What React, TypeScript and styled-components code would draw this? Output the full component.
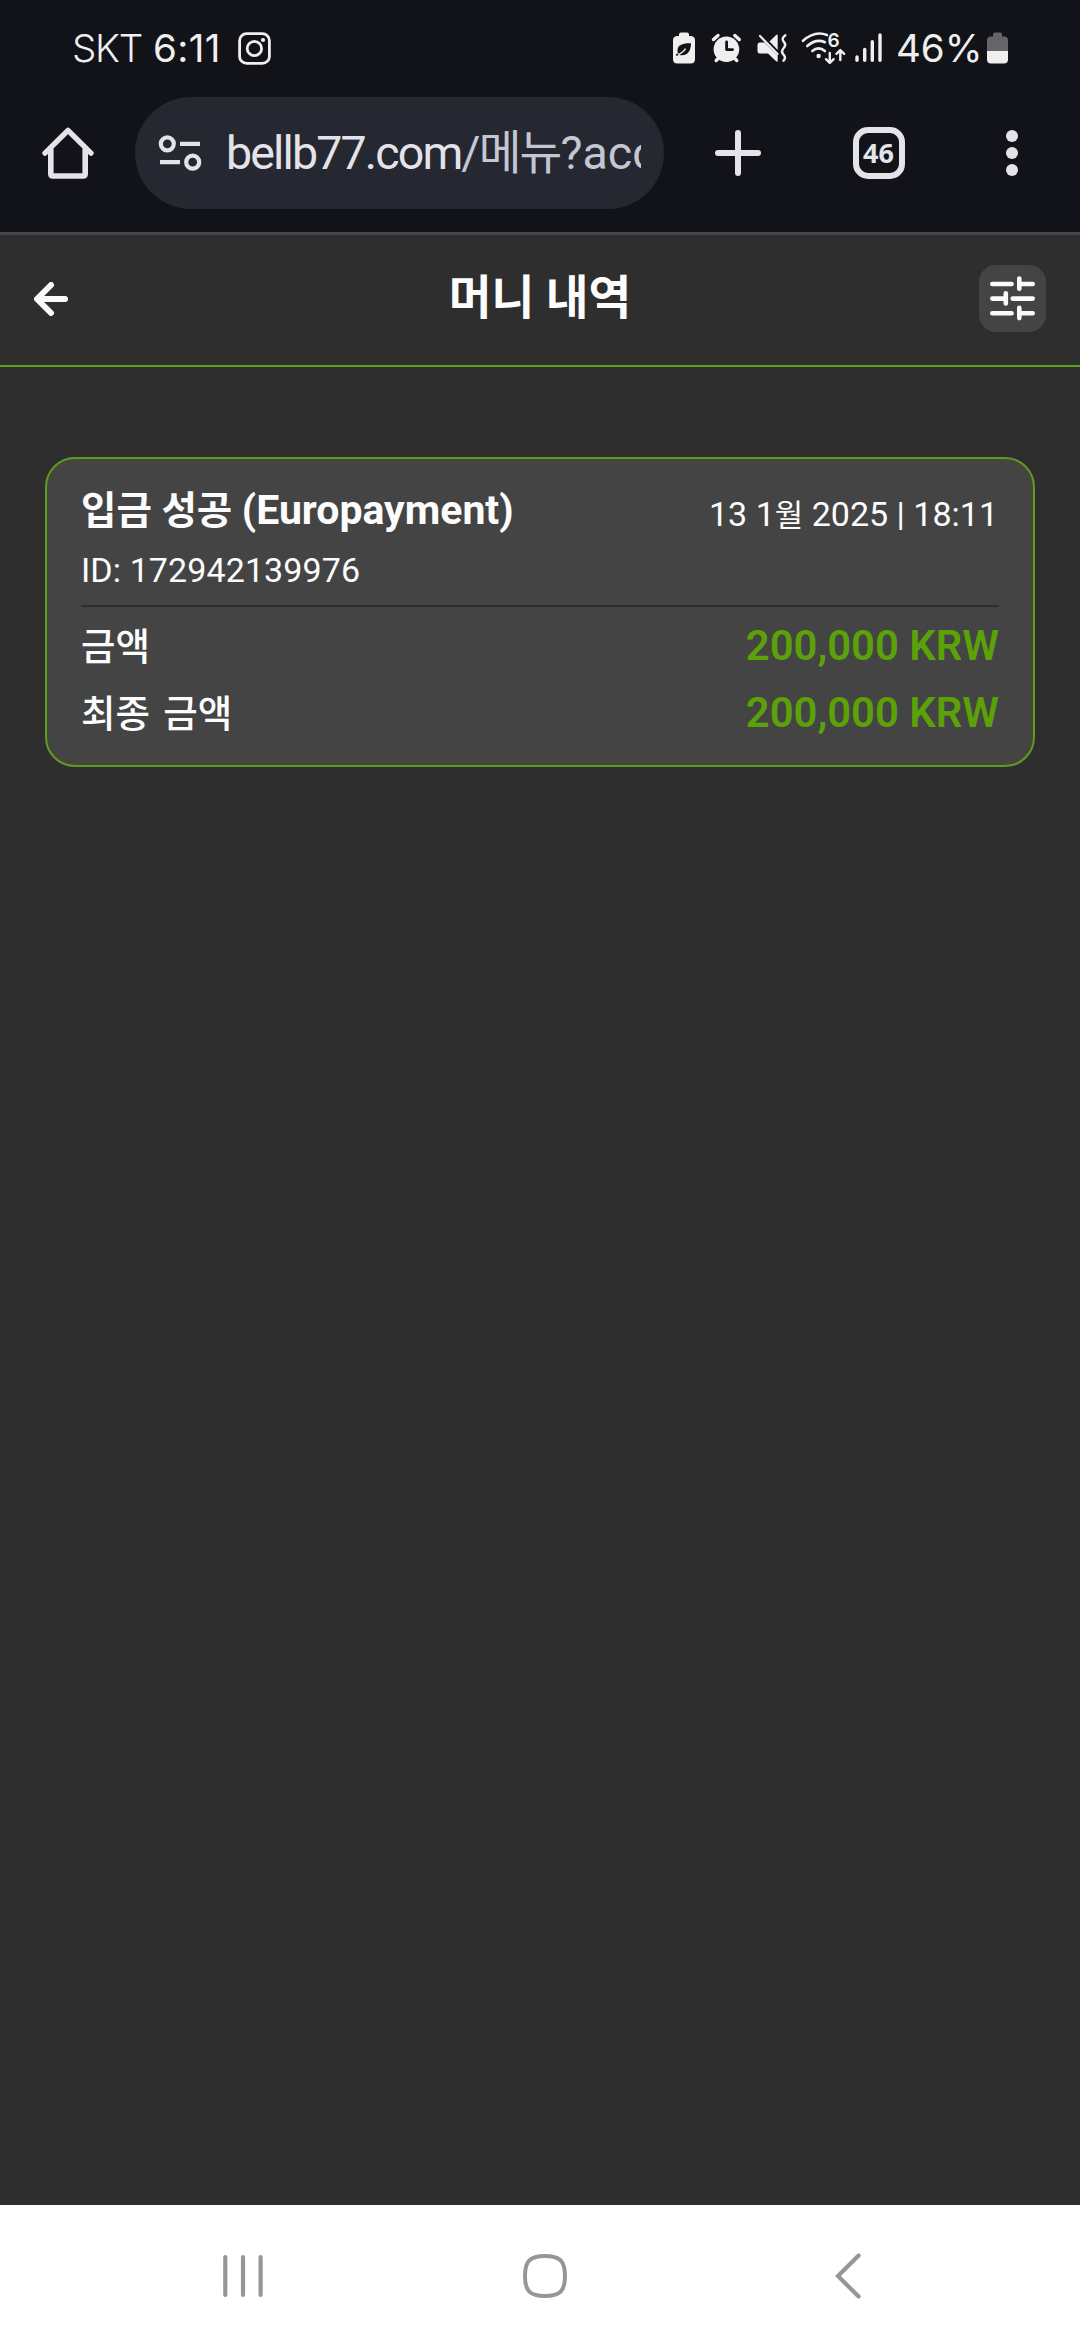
import React from "react";
import styled, { createGlobalStyle } from "styled-components";

const GlobalStyle = createGlobalStyle`
  *, *::before, *::after { box-sizing: border-box; }
  html, body { margin: 0; padding: 0; background: #2e2e2e; }
  svg { display: block; flex: none; }
`;

const roboto = `Roboto, "Noto Sans CJK KR", sans-serif`;
const inter = `Inter, "Noto Sans CJK KR", sans-serif`;

const Screen = styled.div`
  width: 1080px;
  height: 2340px;
  display: flex;
  flex-direction: column;
  overflow: hidden;
  background: #2e2e2e;
  font-family: ${roboto};
  color: #fcfcfc;
`;

/* ---------- system status bar ---------- */

const StatusBar = styled.div`
  height: 97px;
  padding: 28px 70px 0 72px;
  display: flex;
  justify-content: space-between;
  background: #121318;
  color: #efefef;
`;

const StatusGroup = styled.div`
  display: flex;
  align-items: center;
  height: 40px;
`;

const StatusText = styled.span<{ $width: number; $weight?: number; $spacing?: number }>`
  width: ${(p) => p.$width}px;
  flex: none;
  white-space: nowrap;
  font-family: ${inter};
  font-size: 38.5px;
  line-height: 40px;
  font-weight: ${(p) => p.$weight ?? 400};
  letter-spacing: ${(p) => p.$spacing ?? 0}px;
`;

/* Every status glyph shares one vertical window, so only x and width vary. */
const StatusGlyph = ({ x, w, children }: { x: number; w: number; children: React.ReactNode }) => (
  <svg width={w} height={40} viewBox={`${x} 28 ${w} 40`} fill="none">
    {children}
  </svg>
);

/* ---------- browser toolbar ---------- */

const BrowserBar = styled.div`
  height: 138px;
  padding: 0 44px 23px 40px;
  display: flex;
  align-items: center;
  background: #121318;
  border-bottom: 3px solid #45474f;
`;

const AddressPill = styled.div`
  width: 529px;
  height: 112px;
  margin-left: 39px;
  padding: 0 23px 0 23px;
  display: flex;
  align-items: center;
  border-radius: 56px;
  background: #252831;
`;

const Url = styled.div`
  width: 415px;
  margin-left: 22px;
  overflow: hidden;
  white-space: nowrap;
  font-size: 46.5px;
  line-height: 60px;
  letter-spacing: -1.85px;
  color: #e4e3e9;
`;

const UrlPath = styled.span`
  color: #c4c6d1;
`;

const UrlQuery = styled(UrlPath)`
  letter-spacing: 0;
`;

const BarActions = styled.div`
  flex: 1;
  margin-left: 47px;
  display: flex;
  align-items: center;
  justify-content: space-between;
`;

const TabCount = styled.div`
  width: 52px;
  height: 52px;
  margin-left: 4px;
  display: flex;
  align-items: center;
  justify-content: center;
  border: 6px solid #e4e3e9;
  border-radius: 15px;
  font: 700 27px/40px "Noto Sans", sans-serif;
  color: #e4e3e9;
`;

/* ---------- page ---------- */

const PageHeader = styled.header`
  height: 132px;
  padding: 0 34px 3px 34px;
  display: grid;
  grid-template-columns: 67px 1fr 67px;
  align-items: center;
  border-bottom: 2px solid #69953a;
  box-shadow: 0 1px 0 #23380c, inset 0 -1px 0 #23380c;
`;

const Title = styled.h1`
  margin: 0;
  padding-bottom: 2px;
  text-align: center;
  font-size: 46.5px;
  line-height: 60px;
  font-weight: 700;
`;

const FilterButton = styled.div`
  width: 67px;
  height: 67px;
  border-radius: 17px;
  background: #444444;
`;

const Content = styled.main`
  flex: 1;
  padding: 90px 45px 0;
`;

const Card = styled.section`
  height: 310px;
  padding: 24px 34px 0;
  border: 2px solid #65962c;
  border-radius: 30px;
  background: #444444;
  box-shadow: inset 0 0 0 1px #37541a;
`;

const CardHead = styled.div`
  display: flex;
  justify-content: space-between;
  height: 54px;
`;

const CardTitle = styled.div`
  font-size: 38.5px;
  line-height: 54px;
  font-weight: 700;
  white-space: nowrap;
`;

const Provider = styled.span`
  font-size: 41px;
`;

const CardMeta = styled.div`
  padding-top: 6px;
  font-size: 34px;
  line-height: 54px;
  letter-spacing: 0.1px;
  white-space: nowrap;
`;

const CardDate = styled(CardMeta)`
  padding-top: 4px;
  padding-right: 1px;
  letter-spacing: 0;
`;

const Month = styled.span`
  font-size: 31px;
`;

const Divider = styled.div`
  height: 2px;
  margin: 8px 0 5px;
  background: #2e2e2e;
`;

const AmountRow = styled.div`
  height: 67px;
  display: flex;
  align-items: center;
  justify-content: space-between;
`;

const AmountLabel = styled.span`
  padding-top: 2px;
  font-size: 37.5px;
  line-height: 54px;
  font-weight: 500;
  word-spacing: 4px;
`;

const AmountValue = styled.span`
  font-size: 41.8px;
  line-height: 54px;
  font-weight: 600;
  color: #5ba108;
`;

/* ---------- system navigation ---------- */

const NavBar = styled.nav`
  height: 135px;
  padding: 7px 216px 0 218px;
  display: flex;
  align-items: center;
  justify-content: space-between;
  background: #ffffff;
`;

const ink = "#efefef";
const chrome = "#e4e3e9";

const InstagramGlyph = () => (
  <StatusGlyph x={236} w={38}>
    <rect x={239.6} y={33.6} width={29.8} height={29.8} rx={7} stroke={ink} strokeWidth={2.8} />
    <circle cx={254.4} cy={48.5} r={7.2} stroke={ink} strokeWidth={2.8} />
    <circle cx={263} cy={40} r={2.1} fill={ink} />
  </StatusGlyph>
);

const BatterySaverGlyph = () => (
  <StatusGlyph x={670} w={40}>
    <path
      d="M679 36v-1.400q0-2 2-2h6q2 0 2 2V36h1.500q4.500 0 4.500 4.500V59q0 4.500-4.500 4.500h-13q-4.500 0-4.500-4.500V40.500q0-4.500 4.500-4.500z"
      fill={ink}
    />
    <path d="M691 43.300c-8-.3-13.500 1.500-13.500 7.200 0 1 .1 1.800.5 2.700l-2.300 1.300 1 1.500 2.500-1.300c5.500 2.200 11.800-1.200 11.800-11.400z" fill="#121318" />
    <path d="M678 54.500c2.500-.7 5.500-2.500 7.500-5.800" stroke={ink} strokeWidth={1.4} />
  </StatusGlyph>
);

const AlarmGlyph = () => (
  <StatusGlyph x={710} w={44}>
    <circle cx={726.4} cy={49.3} r={12.8} fill={ink} />
    <path d="M713.500 39.500l4.500-4M739.300 39.500l-4.500-4M716.200 60.500l3-3M736.800 60.500l-3-3" stroke={ink} strokeWidth={3.4} strokeLinecap="round" />
    <path d="M726.600 42v7.600h6" stroke="#121318" strokeWidth={2.8} strokeLinecap="round" strokeLinejoin="round" />
  </StatusGlyph>
);

const MuteGlyph = () => (
  <StatusGlyph x={754} w={44}>
    <path d="M760 42.500h4.500l13.200 13V60.500q0 2-1.600.8L768 53.500h-8q-2.500 0-2.500-2.500v-6q0-2.500 2.500-2.500z" fill={ink} />
    <path d="M769.500 41.500l6.600-6.500q1.600-1.300 1.600.7v14.200z" fill={ink} />
    <path d="M760 36l17.500 18" stroke={ink} strokeWidth={2.2} strokeLinecap="round" />
    <path d="M785.300 35.200q-4.200 3.300-1.800 6.200 3.200 3.400.2 6.600-3.200 3.500 0 6.800 2.700 3.200-.3 6" stroke={ink} strokeWidth={2.4} strokeLinecap="round" />
  </StatusGlyph>
);

const WifiGlyph = () => (
  <StatusGlyph x={798} w={56}>
    <path d="M803 40.800q11.800-10.600 24-5.800M807.300 46q9-7.800 17.600-3.800M812.300 51q6.300-5.300 12.600 0" stroke={ink} strokeWidth={2.6} strokeLinecap="round" />
    <circle cx={818.6} cy={56} r={2.2} fill={ink} />
    <text x={827.6} y={46.5} fontFamily="Inter, sans-serif" fontSize={19} fontWeight={600} fill={ink}>6</text>
    <path d="M829.800 53v9.500M826 59.200l3.800 3.800 3.800-3.800M840.300 60V50.300M836.500 53.800l3.800-3.800 3.800 3.800" stroke={ink} strokeWidth={2.4} strokeLinecap="round" strokeLinejoin="round" />
  </StatusGlyph>
);

const SignalGlyph = () => (
  <StatusGlyph x={854} w={42}>
    {[
      [857, 57],
      [864.7, 49.5],
      [872.3, 41.8],
      [880, 35],
    ].map(([x, y]) => (
      <path key={x} d={`M${x} ${y}V60.3`} stroke={ink} strokeWidth={3.4} strokeLinecap="round" />
    ))}
  </StatusGlyph>
);

const BatteryGlyph = () => (
  <StatusGlyph x={984} w={26}>
    <path d="M993 36.500v-1.900q0-2 2-2h5q2 0 2 2v1.900h2q4 0 4 4V51.300h-21V40.500q0-4 4-4z" fill="#646568" />
    <path d="M987 51h21v8.500q0 4-4 4h-13q-4 0-4-4z" fill={ink} />
  </StatusGlyph>
);

const HomeGlyph = () => (
  <svg width={56} height={56} viewBox="40 125 56 56" fill="none">
    <path d="M45 153.200L68 130.300l23 22.900" stroke={chrome} strokeWidth={5.4} strokeLinecap="round" strokeLinejoin="round" />
    <path d="M50.800 148.500v25.300q0 2.200 2.200 2.200h30q2.200 0 2.200-2.200v-25.300" stroke={chrome} strokeWidth={5.6} />
  </svg>
);

const SiteInfoGlyph = () => (
  <svg width={46} height={40} viewBox="158 133 46 40" fill="none" stroke={chrome} strokeWidth={4.2}>
    <circle cx={167.3} cy={143.8} r={6.5} />
    <path d="M180 143.800h20M160 162.200h20" />
    <circle cx={192.7} cy={162.2} r={6.5} />
  </svg>
);

const PlusGlyph = () => (
  <svg width={54} height={54} viewBox="0 0 54 54" fill="none" stroke={chrome} strokeWidth={6} strokeLinecap="round">
    <path d="M27 7v40M7 27h40" />
  </svg>
);

const MoreGlyph = () => (
  <svg width={48} height={54} viewBox="0 0 48 54" fill={chrome}>
    <circle cx={24} cy={10} r={6} />
    <circle cx={24} cy={27} r={6} />
    <circle cx={24} cy={44} r={6} />
  </svg>
);

const BackGlyph = () => (
  <svg width={34} height={34} viewBox="0 0 34 34" fill="none" stroke="#fafafa" strokeWidth={6} strokeLinecap="round" strokeLinejoin="round">
    <path d="M17 3L3 17l14 14M4 17h27" />
  </svg>
);

const SlidersGlyph = () => (
  <svg width={67} height={67} viewBox="0 0 67 67" fill="none" stroke="#fafafa" strokeWidth={4.6} strokeLinecap="round">
    <path d="M13.300 19h19.300M40.300 13.600v10.200M41 19h12.700" />
    <path d="M13.300 33.600h13M26.800 28.300v10.200M33.700 33.600h20" />
    <path d="M13.300 48.200h19.300M40.300 42.900v10.200M41 48.200h12.700" />
  </svg>
);

const RecentsGlyph = () => (
  <svg width={50} height={50} viewBox="218 2251 50 50" fill="none" stroke="#969696" strokeWidth={4.2} strokeLinecap="round">
    <path d="M225.300 2257v38M243 2257v38M260.600 2257v38" />
  </svg>
);

const NavHomeGlyph = () => (
  <svg width={50} height={50} viewBox="520 2251 50 50" fill="none" stroke="#969696" strokeWidth={4}>
    <path d="M545 2256c15 0 20 5 20 20s-5 20-20 20-20-5-20-20 5-20 20-20z" />
  </svg>
);

const NavBackGlyph = () => (
  <svg width={42} height={50} viewBox="822 2251 42 50" fill="none" stroke="#969696" strokeWidth={4.2} strokeLinecap="round">
    <path d="M858.600 2255.500L838 2276l20.600 20.600" />
  </svg>
);

const amounts = [
  { label: "금액", value: "200,000 KRW" },
  { label: "최종 금액", value: "200,000 KRW" },
];

export default function App() {
  return (
    <>
      <GlobalStyle />
      <Screen>
        <StatusBar>
          <StatusGroup>
            <StatusText $width={81} $weight={350} $spacing={-1.3}>SKT</StatusText>
            <StatusText $width={83} $spacing={0.4}>6:11</StatusText>
            <InstagramGlyph />
          </StatusGroup>
          <StatusGroup>
            <BatterySaverGlyph />
            <AlarmGlyph />
            <MuteGlyph />
            <WifiGlyph />
            <SignalGlyph />
            <StatusText $width={88}>46%</StatusText>
            <BatteryGlyph />
          </StatusGroup>
        </StatusBar>

        <BrowserBar>
          <HomeGlyph />
          <AddressPill>
            <SiteInfoGlyph />
            <Url>
              bellb77.com<UrlPath>/메뉴</UrlPath>
              <UrlQuery>?acc</UrlQuery>
            </Url>
          </AddressPill>
          <BarActions>
            <PlusGlyph />
            <TabCount>46</TabCount>
            <MoreGlyph />
          </BarActions>
        </BrowserBar>

        <PageHeader>
          <BackGlyph />
          <Title>머니 내역</Title>
          <FilterButton>
            <SlidersGlyph />
          </FilterButton>
        </PageHeader>

        <Content>
          <Card>
            <CardHead>
              <CardTitle>
                입금 성공 <Provider>(Europayment)</Provider>
              </CardTitle>
              <CardDate>
                13 1<Month>월</Month> 2025 | 18:11
              </CardDate>
            </CardHead>
            <CardMeta>ID: 172942139976</CardMeta>
            <Divider />
            {amounts.map((row) => (
              <AmountRow key={row.label}>
                <AmountLabel>{row.label}</AmountLabel>
                <AmountValue>{row.value}</AmountValue>
              </AmountRow>
            ))}
          </Card>
        </Content>

        <NavBar>
          <RecentsGlyph />
          <NavHomeGlyph />
          <NavBackGlyph />
        </NavBar>
      </Screen>
    </>
  );
}
